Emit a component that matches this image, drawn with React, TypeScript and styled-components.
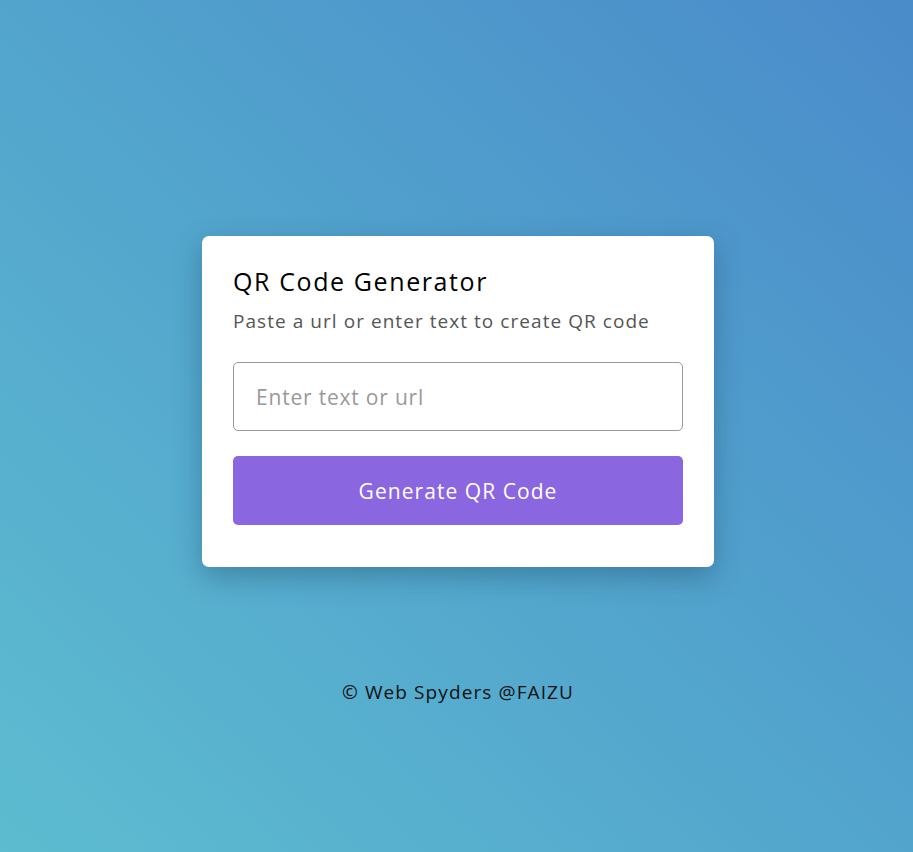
import React, { useState } from "react";
import styled, { createGlobalStyle } from "styled-components";

const Global = createGlobalStyle`
  * { box-sizing: border-box; margin: 0; padding: 0; }
  html, body { height: 100%; }
  body {
    font-family: "Open Sans", "Liberation Sans", sans-serif;
    background: linear-gradient(to top right, #5dbcd0 0%, #52a4cd 50%, #4a8bca 100%);
    min-height: 100vh;
  }
`;

const Page = styled.div`
  min-height: 100vh;
  display: flex;
  flex-direction: column;
  align-items: center;
  padding: 236px 0 0 3px;
`;

const Card = styled.div`
  width: 512px;
  background: #fff;
  border-radius: 7px;
  padding: 30px 31px 42px;
  box-shadow: 0 10px 28px rgba(20, 60, 90, 0.35);
`;

const Title = styled.h1`
  font-size: 25px;
  font-weight: 500;
  letter-spacing: 1.6px;
  color: #000;
  line-height: 30px;
`;

const Subtitle = styled.p`
  margin-top: 12px;
  font-size: 19px;
  letter-spacing: 1.05px;
  color: #555;
  line-height: 26px;
`;

const Input = styled.input`
  display: block;
  width: 100%;
  height: 69px;
  margin-top: 28px;
  border: 1px solid #999;
  border-radius: 5px;
  padding: 0 22px;
  font-family: inherit;
  font-size: 21px;
  letter-spacing: 0.8px;
  color: #333;
  outline: none;
  &::placeholder { color: #999; }
`;

const Button = styled.button`
  display: block;
  width: 100%;
  height: 69px;
  margin-top: 25px;
  border: none;
  border-radius: 5px;
  background: #8a67e0;
  color: #fff;
  font-family: inherit;
  font-size: 21px;
  letter-spacing: 1.05px;
  cursor: pointer;
`;

const Footer = styled.footer`
  margin-top: 112px;
  font-size: 19px;
  letter-spacing: 1.1px;
  line-height: 27px;
  color: #111;
`;

export default function App() {
  const [text, setText] = useState("");
  return (
    <>
      <Global />
      <Page>
        <Card>
          <Title>QR Code Generator</Title>
          <Subtitle>Paste a url or enter text to create QR code</Subtitle>
          <Input
            placeholder="Enter text or url"
            value={text}
            onChange={(e) => setText(e.target.value)}
          />
          <Button>Generate QR Code</Button>
        </Card>
        <Footer>© Web Spyders @FAIZU</Footer>
      </Page>
    </>
  );
}
